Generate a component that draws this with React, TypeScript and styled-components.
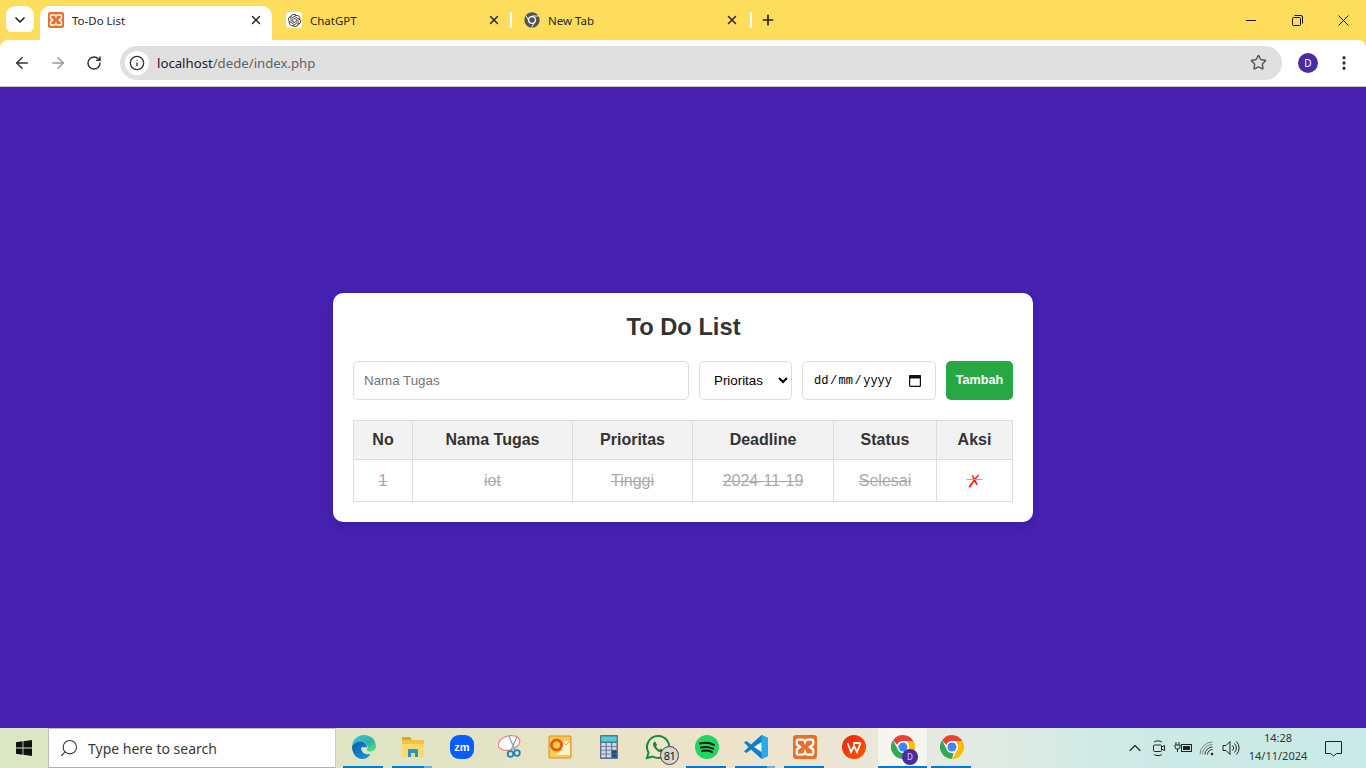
import React from "react";
import styled, { createGlobalStyle } from "styled-components";
import { ArrowLeft, ArrowRight, RotateCw, Info, Star, EllipsisVertical, ChevronDown, X, Plus, ChevronUp, Search } from "lucide-react";
import { SiOpenai } from "react-icons/si";

const Global = createGlobalStyle`
  html, body { margin: 0; padding: 0; height: 100%; overflow: hidden; }
  * { box-sizing: border-box; }
  body { font-family: "Liberation Sans", Arial, sans-serif; }
`;

const Screen = styled.div`
  width: 1366px; height: 768px; display: flex; flex-direction: column; overflow: hidden;
`;
const TabStrip = styled.div`
  height: 40px; flex: none; background: #ffdd5c; display: flex; align-items: flex-end; padding-left: 6px; color: #1f1f1f;
`;
const TabSearch = styled.div`
  width: 28px; height: 28px; border-radius: 9px; background: #fff; align-self: flex-start; margin-top: 6px; margin-right: 6px;
  display: flex; align-items: center; justify-content: center;
`;
const Tab = styled.div<{ $active?: boolean; $sep?: boolean; $w: number; $pad: number }>`
  position: relative; height: 34px; width: ${p => p.$w}px; flex: none; display: flex; align-items: center; padding: 0 0 6px ${p => p.$pad}px;
  font: 11.5px "Noto Sans", "Open Sans", sans-serif; color: #262626;
  background: ${p => p.$active ? "#fff" : "transparent"};
  border-radius: 10px 10px 0 0;
  ${p => p.$sep && `&::after { content: ""; position: absolute; right: 0; top: 6px; width: 2px; height: 16px; background: #fff; }`}
`;
const Favicon = styled.span`
  width: 16px; height: 16px; flex: none; margin-right: 8px; display: flex; align-items: center; justify-content: center; border-radius: 3px;
`;
const WhiteFavicon = styled(Favicon)`background: #fff;`;
const TabTitle = styled.span`flex: 1; white-space: nowrap;`;
const TabClose = styled.span<{ $mr: number }>`width: 16px; height: 16px; margin-right: ${p => p.$mr}px; display: flex; align-items: center; justify-content: center;`;
const NewTab = styled.div`
  width: 32px; height: 28px; align-self: flex-start; margin-top: 6px; display: flex; align-items: center; justify-content: center;
`;
const WinControls = styled.div`
  margin-left: auto; align-self: flex-start; height: 40px; display: flex; color: #111;
`;
const WinButton = styled.div`
  width: 46px; height: 40px; display: flex; align-items: center; justify-content: center;
`;
const Toolbar = styled.div`
  height: 47px; flex: none; background: #fff; display: flex; align-items: center; padding: 0 0 1px 4px; border-bottom: 1px solid #c4c7c5;
  border-radius: 8px 8px 0 0;
  box-shadow: 0 -8px 0 0 #ffdd5c;
`;
const NavButton = styled.div`
  width: 36px; height: 34px; display: flex; align-items: center; justify-content: center; color: #333;
`;
const Omnibox = styled.div`
  width: 1162px; height: 34px; border-radius: 17px; background: #e0e0e0; margin-left: 8px; display: flex; align-items: center; padding: 0 15px 0 5px;
`;
const InfoChip = styled.div`
  width: 24px; height: 24px; border-radius: 50%; background: #fff; display: flex; align-items: center; justify-content: center; color: #333; margin-right: 8px;
`;
const Url = styled.div`font: 13.2px "Noto Sans", sans-serif; color: #5f6368; flex: 1; white-space: nowrap;`;
const Host = styled.span`color: #202124;`;
const Avatar = styled.div`
  width: 20px; height: 20px; border-radius: 50%; background: #4a2aa5; color: #fff; font: 10px "Noto Sans", sans-serif; display: flex; align-items: center; justify-content: center; margin-left: 16px;
`;
const MenuBtn = styled.div`
  width: 36px; margin-left: 8px; height: 34px; display: flex; align-items: center; justify-content: center; color: #333;
`;
const Main = styled.main`
  flex: 1; background: #4520b1; display: flex; align-items: center; justify-content: center;
`;
const Card = styled.div`
  width: 700px; background: #fff; border-radius: 10px; padding: 20px; box-shadow: 0 4px 8px rgba(0,0,0,.1);
`;
const Title = styled.h1`
  margin: 0 0 20px; padding-left: 1px; text-align: center; font-size: 23.7px; line-height: 28px; font-weight: 700; color: #333;
`;
const Form = styled.form`display: flex; gap: 10px; margin-bottom: 20px; height: 39px;`;
const field = `
  height: 39px; border: 1px solid #ddd; border-radius: 5px; font-family: "Liberation Sans", Arial, sans-serif; font-size: 13.33px; background: #fff; padding: 10px; outline: none;
`;
const TaskInput = styled.input`
  ${field} flex: 1; min-width: 0;
  &::placeholder { color: #757575; opacity: 1; }
`;
const PrioritySelect = styled.select`${field} width: 93px; color: #000;`;
const DateField = styled.div`
  ${field} width: 134px; display: flex; align-items: center; justify-content: space-between; padding: 0 14px 0 11px; color: #000;
  font: 12px "Liberation Mono", "DejaVu Sans Mono", monospace; white-space: pre;
`;
const DateSep = styled.span`margin: 0 1.5px;`;
const AddButton = styled.button`
  width: 67px; height: 39px; border: none; border-radius: 5px; background: #28a745; color: #fff; font: 700 12.6px/1 "Liberation Sans", Arial, sans-serif; padding: 0;
`;
const Table = styled.table`
  width: 659px; border-collapse: collapse; table-layout: fixed; color: #333;
`;
const Th = styled.th<{ $w: number }>`
  width: ${p => p.$w}px; height: 39px; padding: 0; border: 1px solid #ddd; background: #f2f2f2; font-size: 16px; font-weight: 700; text-align: center;
`;
const Td = styled.td`
  height: 42px; padding: 0; border: 1px solid #ddd; font-size: 16px; text-align: center; color: #aaa; text-decoration: line-through;
`;
const DeleteMark = styled.a`
  color: #f00; font-family: "DejaVu Sans", sans-serif; font-size: 19px; line-height: 16px; vertical-align: -2px; -webkit-text-stroke: .6px #fff;
`;

const Taskbar = styled.div`
  height: 40px; flex: none; display: flex; align-items: stretch; position: relative;
  background: linear-gradient(90deg, #dbe6c3 0%, #dfe4c4 30%, #eee3c9 52%, #ede6d6 62%, #e2ebe4 72%, #cdeae5 82%, #c8eae6 100%);
`;
const StartBtn = styled.div`width: 48px; display: flex; align-items: center; justify-content: center;`;
const SearchBox = styled.div`
  width: 288px; background: #fff; border: 1px solid #b8bfb6; border-bottom-color: #b0b0b0; border-right-color: #ccc; display: flex; align-items: center; padding-left: 10px; color: #333;
  font: 14px "Noto Sans", "Open Sans", sans-serif; margin-right: 3px;
`;
const MirroredSearch = styled(Search)`transform: scaleX(-1);`;
const SearchText = styled.span`margin-left: 9px; color: #3a3a3a;`;
const Slot = styled.div<{ $active?: boolean }>`
  position: relative; width: 49px; display: flex; align-items: center; justify-content: center; padding-bottom: 2px;
  background: ${p => p.$active ? "rgba(255,255,255,.6)" : "transparent"};
`;
const Running = styled.span<{ $tail?: boolean; $full?: boolean }>`
  position: absolute; bottom: 0; left: ${p => p.$full ? 0 : 4}px; right: ${p => p.$full ? 0 : 5}px; height: 2px;
  background: ${p => p.$tail ? "linear-gradient(90deg, #0078d4 80%, #6bb0e4 80%)" : "#0078d4"};
`;
const Count = styled.span`
  position: absolute; left: 27px; top: 18px; width: 19px; height: 19px; border-radius: 50%; background: #d5d8d0; border: 1px solid #444; color: #111;
  font: 11px/17px "Noto Sans", sans-serif; text-align: center; letter-spacing: -.5px;
`;
const Badge = styled.span`
  position: absolute; left: 24px; top: 21px; width: 16px; height: 16px; border-radius: 50%; background: #4a2aa5; color: #ddd; font: 8px/16px "Noto Sans", sans-serif; text-align: center;
`;
const Tray = styled.div`margin-left: auto; display: flex; align-items: center; color: #222;`;
const TrayIcon = styled.div`width: 24px; height: 40px; display: flex; align-items: center; justify-content: center;`;
const Clock = styled.div`
  width: 66px; margin: -2px 1px 0 2px; font: 11px/18px "Noto Sans", sans-serif; text-align: center; color: #333; white-space: nowrap;
`;
const Notify = styled.div`width: 42px; display: flex; align-items: center; justify-content: center; margin-right: 12px;`;

const XamppIcon = ({ size = 16 }: { size?: number }) => (
  <svg width={size} height={size} viewBox="0 0 16 16">
    <rect width="16" height="16" rx="2" fill="#e8702a" />
    <path d="M3.500 3h3c.8 0 1.200.8 1.500 1.600.3-.8.7-1.600 1.500-1.600h3c.8 0 1 .6 1 1.200v1.400c0 1-.6 1.400-1.400 1.600l-.9.8.9.8c.8.2 1.400.6 1.400 1.600v1.400c0 .6-.2 1.200-1 1.200h-3c-.8 0-1.200-.8-1.500-1.600-.3.8-.7 1.600-1.500 1.600h-3c-.8 0-1-.6-1-1.200v-1.400c0-1 .6-1.400 1.400-1.600l.9-.8-.9-.8C3.100 7 2.500 6.600 2.500 5.600V4.200C2.500 3.600 2.700 3 3.500 3z" fill="none" stroke="#fff" strokeWidth="1.500" />
  </svg>
);
const ChromeIcon = ({ size = 16 }: { size?: number }) => (
  <svg width={size} height={size} viewBox="0 0 24 24">
    <circle cx="12" cy="12" r="12" fill="#fff" />
    <path d="M12 0a12 12 0 0 1 10.400 6H12a6 6 0 0 0-5.700 4.100L2.100 5.200A12 12 0 0 1 12 0z" fill="#ea4335" />
    <path d="M22.400 6A12 12 0 0 1 12 24l5.200-9A6 6 0 0 0 17.200 9 L16 6z" fill="#fbbc04" />
    <path d="M12 24A12 12 0 0 1 2.100 5.200L7 14.800a6 6 0 0 0 6.600 3L12 24z" fill="#34a853" />
    <circle cx="12" cy="12" r="5.600" fill="#fff" />
    <circle cx="12" cy="12" r="4.500" fill="#4285f4" />
  </svg>
);
const GrayChrome = () => (
  <svg width="16" height="16" viewBox="0 0 24 24">
    <circle cx="12" cy="12" r="11.500" fill="#555" />
    <circle cx="12" cy="12" r="6" fill="#fff" />
    <circle cx="12" cy="12" r="4.200" fill="#555" />
    <path d="M12 6h10M8 14.500 3 5.500M16.500 14 11.500 23" stroke="#fff" strokeWidth="1.300" />
  </svg>
);
const MinimizeIcon = () => (
  <svg width="10" height="10" viewBox="0 0 10 10"><path d="M0 5.500h10" stroke="#111" strokeWidth="1" /></svg>
);
const RestoreIcon = () => (
  <svg width="11" height="11" viewBox="0 0 11 11" fill="none" stroke="#111" strokeWidth="1">
    <rect x=".5" y="2.500" width="8" height="8" rx="1" />
    <path d="M2.500 .5h6.500a1.500 1.500 0 0 1 1.500 1.500v6.500" />
  </svg>
);
const CloseIcon = () => (
  <svg width="11" height="11" viewBox="0 0 11 11" fill="none" stroke="#111" strokeWidth="1"><path d="M.5.5l10 10M10.500.5l-10 10" /></svg>
);
const WinLogo = () => (
  <svg width="16" height="16" viewBox="0 0 16 16" fill="#111">
    <path d="M0 2.300 6.600 1.300v6.300H0zM7.400 1.200 16 0v7.600H7.400zM0 8.400h6.600v6.300L0 13.700zM7.400 8.400H16V16l-8.600-1.200z" />
  </svg>
);
const EdgeIcon = () => (
  <svg width="24" height="24" viewBox="0 0 24 24">
    <defs>
      <linearGradient id="eg1" x1="0" y1="0" x2="1" y2="1"><stop offset="0" stopColor="#35c1f1" /><stop offset=".6" stopColor="#2fb5a0" /><stop offset="1" stopColor="#66eb6e" /></linearGradient>
      <linearGradient id="eg2" x1="0" y1="0" x2="1" y2="1"><stop offset="0" stopColor="#0c59a4" /><stop offset="1" stopColor="#1b9de2" /></linearGradient>
    </defs>
    <path d="M12 0c7 0 12 5 12 11.500 0 3-2.500 5-5.500 5-2 0-3.700-.8-3.700-1.800 0-.6.900-.9.900-2.500 0-3-3-5.700-6.700-5.700C5 6.500 1.500 8.500 0 11.500.2 5 5.500 0 12 0z" fill="url(#eg1)" />
    <path d="M0 11.500C1.500 8.500 5 6.500 8.500 6.500c3.700 0 6.700 2.700 6.700 5.700H9.300c-.6 3.500 2 8 9.200 7-2 2.800-4.500 4.800-8 4.800C4 24 0 18 0 11.500z" fill="url(#eg2)" />
  </svg>
);
const FolderIcon = () => (
  <svg width="24" height="22" viewBox="0 0 24 22">
    <path d="M1 1h8l2 3H1z" fill="#e0a526" />
    <rect x="1" y="4" width="22" height="17" rx="1" fill="#fcd96a" />
    <rect x="1" y="4" width="22" height="4" fill="#f4c33e" />
    <path d="M7 21v-7a1 1 0 0 1 1-1h8a1 1 0 0 1 1 1v7h-3v-4h-4v4z" fill="#2b8fd8" />
  </svg>
);
const ZoomIcon = () => (
  <svg width="24" height="24" viewBox="0 0 24 24">
    <rect width="24" height="24" rx="9" fill="#0b5cff" />
    <text x="12" y="15.500" textAnchor="middle" fontFamily="Liberation Sans, sans-serif" fontWeight="700" fontSize="11" fill="#fff">zm</text>
  </svg>
);
const SnipIcon = () => (
  <svg width="26" height="26" viewBox="0 0 26 26">
    <ellipse cx="11" cy="9" rx="11" ry="7" transform="rotate(-15 11 9)" fill="#fff" stroke="#e58a8a" strokeWidth="1.300" />
    <path d="M11 2 17 16M19 3 13 16" stroke="#8a9aa8" strokeWidth="1.200" />
    <circle cx="12.500" cy="20" r="2.800" fill="none" stroke="#2a7fc0" strokeWidth="1.800" />
    <circle cx="19" cy="19" r="2.800" fill="none" stroke="#2a7fc0" strokeWidth="1.800" />
  </svg>
);
const OutlookIcon = () => (
  <svg width="24" height="24" viewBox="0 0 24 24">
    <rect x="1" y="1" width="22" height="22" rx="1" fill="#f9c952" stroke="#d98f1e" />
    <rect x="13" y="6" width="9" height="8" fill="#fdf0c8" />
    <path d="M13 16 22 10v10H8z" fill="#fff3cf" />
    <path d="M14 6l4 4 4-4" fill="none" stroke="#c9952c" strokeWidth=".8" />
    <circle cx="8.500" cy="10" r="5" fill="none" stroke="#e35f10" strokeWidth="3" />
  </svg>
);
const CalcIcon = () => (
  <svg width="18" height="24" viewBox="0 0 20 24" preserveAspectRatio="none">
    <rect width="20" height="24" rx="1" fill="#5e7388" />
    <rect x="1.500" y="1.500" width="17" height="5" fill="#47cfe0" />
    {[0, 1, 2, 3].flatMap(r => [0, 1, 2].map(c => (
      <rect key={`${r}-${c}`} x={1.5 + c * 6} y={8 + r * 3.8} width="4.800" height="3" fill={c === 2 && r > 1 ? "#1b4f8a" : "#cfd8e0"} />
    )))}
  </svg>
);
const WhatsappIcon = () => (
  <svg width="26" height="26" viewBox="0 0 26 26" fill="none">
    <path d="M13 2a11 11 0 0 0-9.500 16.500L2 24l5.700-1.500A11 11 0 1 0 13 2z" stroke="#168a3e" strokeWidth="2" fill="#fff" fillOpacity=".1" />
    <path d="M9.500 7.500c-1.500 1-2 2.700-1 4.800 1.200 2.500 3.300 4.600 5.800 5.600 2 .8 3.700.1 4.300-1.500l-2.800-1.800-1.300 1.200c-1.500-.6-2.800-2-3.500-3.500l1.100-1.300-1.600-3z" fill="#168a3e" />
  </svg>
);
const SpotifyIcon = () => (
  <svg width="24" height="24" viewBox="0 0 24 24">
    <circle cx="12" cy="12" r="12" fill="#1ed760" />
    <path d="M5 8.500c5-1.300 10-.9 14 1.300M6 12.500c4.200-1 8.500-.7 12 1.200M7 16c3.500-.8 7-.6 10 1" fill="none" stroke="#111" strokeWidth="2" strokeLinecap="round" />
  </svg>
);
const VscodeIcon = () => (
  <svg width="24" height="24" viewBox="0 0 24 24">
    <path d="M17.500 0 24 3v18l-6.500 3L7 14.500 2.500 18 0 16.500 4.500 12 0 7.500 2.500 6 7 9.500z" fill="#0e7fc9" />
    <path d="M17.500 0 24 3v18l-6.500 3z" fill="#29a9ef" />
    <path d="M17.500 7 10 12l7.500 5z" fill="#fff" fillOpacity=".95" />
  </svg>
);
const WpsIcon = () => (
  <svg width="24" height="24" viewBox="0 0 24 24">
    <defs>
      <linearGradient id="wp" x1="0" y1="0" x2="1" y2="1"><stop offset="0" stopColor="#f0200e" /><stop offset="1" stopColor="#ff5a00" /></linearGradient>
    </defs>
    <circle cx="12" cy="12" r="12" fill="url(#wp)" />
    <path d="M5.500 8 9 17l3-6 3 6 3.500-9M12 11V8h6.500" fill="none" stroke="#fff" strokeWidth="1.800" />
  </svg>
);
const CameraIcon = () => (
  <svg width="16" height="18" viewBox="0 0 16 18" fill="none" stroke="#222">
    <rect x="2.500" y="6" width="8" height="6.500" rx="1" />
    <path d="M10.500 8l3-1.500v5l-3-1.500M3 3c2-1.500 6-1.500 8 0M3 15.500c2 1.500 6 1.500 8 0" />
  </svg>
);
const BatteryIcon = () => (
  <svg width="18" height="14" viewBox="0 0 18 14" fill="none" stroke="#222">
    <path d="M2 1v3M5 1v3M1 4h5v2a2 2 0 0 1-2 2H3a2 2 0 0 1-2-2zM3.500 8v3" />
    <rect x="7.500" y="3.500" width="10" height="7" />
    <rect x="9" y="5" width="7" height="4" fill="#222" stroke="none" />
  </svg>
);
const WifiIcon = () => (
  <svg width="16" height="16" viewBox="0 0 16 16" fill="none" stroke="#333">
    <path d="M1 14.500A12.500 12.500 0 0 1 13.500 2" opacity=".55" />
    <path d="M3.500 14.500A10 10 0 0 1 13.500 4.500" opacity=".55" />
    <path d="M6 14.500A7.500 7.500 0 0 1 13.500 7" />
    <path d="M8.500 14.500a5 5 0 0 1 5-5" />
    <circle cx="13" cy="14" r="1.300" fill="#222" stroke="none" />
  </svg>
);
const VolumeIcon = () => (
  <svg width="18" height="16" viewBox="0 0 18 16" fill="none" stroke="#222">
    <path d="M1 5.500h3L8 1.500v13l-4-4H1z" />
    <path d="M10.500 5.500a3.500 3.500 0 0 1 0 5M12.500 3.500a6.500 6.500 0 0 1 0 9M14.500 1.500a9.500 9.500 0 0 1 0 13" />
  </svg>
);
const BubbleIcon = () => (
  <svg width="17" height="17" viewBox="0 0 17 17" fill="none" stroke="#222">
    <path d="M.5 1.500h16v12h-5l-3 2.500-3-2.500h-5z" />
  </svg>
);
const CalendarGlyph = () => (
  <svg width="12" height="12" viewBox="0 0 12 12" fill="none">
    <rect x=".6" y=".6" width="10.800" height="10.800" rx="1" stroke="#111" strokeWidth="1.200" />
    <rect x="0" y="0" width="12" height="3.500" rx="1" fill="#111" />
  </svg>
);

const icons = [
  { i: <EdgeIcon />, run: true },
  { i: <FolderIcon />, run: true, tail: true },
  { i: <ZoomIcon /> },
  { i: <SnipIcon /> },
  { i: <OutlookIcon /> },
  { i: <CalcIcon /> },
  { i: <WhatsappIcon />, count: "81" },
  { i: <SpotifyIcon />, run: true },
  { i: <VscodeIcon />, run: true, tail: true },
  { i: <XamppIcon size={24} />, run: true },
  { i: <WpsIcon /> },
  { i: <ChromeIcon size={24} />, run: true, active: true, badge: "D" },
  { i: <ChromeIcon size={24} />, run: true },
];

export default function App() {
  return (
    <Screen>
      <Global />
      <TabStrip>
        <TabSearch><ChevronDown size={16} strokeWidth={2.5} /></TabSearch>
        <Tab $active $w={232} $pad={8}>
          <Favicon><XamppIcon /></Favicon>
          <TabTitle>To-Do List</TabTitle>
          <TabClose $mr={8}><X size={14} strokeWidth={2.5} /></TabClose>
        </Tab>
        <Tab $w={240} $pad={14} $sep>
          <WhiteFavicon><SiOpenai size={13} color="#333" /></WhiteFavicon>
          <TabTitle>ChatGPT</TabTitle>
          <TabClose $mr={10}><X size={14} strokeWidth={2.5} /></TabClose>
        </Tab>
        <Tab $w={240} $pad={12} $sep>
          <Favicon><GrayChrome /></Favicon>
          <TabTitle>New Tab</TabTitle>
          <TabClose $mr={12}><X size={14} strokeWidth={2.5} /></TabClose>
        </Tab>
        <NewTab><Plus size={16} strokeWidth={2.5} /></NewTab>
        <WinControls>
          <WinButton><MinimizeIcon /></WinButton>
          <WinButton><RestoreIcon /></WinButton>
          <WinButton><CloseIcon /></WinButton>
        </WinControls>
      </TabStrip>
      <Toolbar>
        <NavButton><ArrowLeft size={18} strokeWidth={2} /></NavButton>
        <NavButton><ArrowRight size={18} strokeWidth={2} color="#9a9a9a" /></NavButton>
        <NavButton><RotateCw size={16} strokeWidth={2.2} /></NavButton>
        <Omnibox>
          <InfoChip><Info size={16} strokeWidth={2} /></InfoChip>
          <Url><Host>localhost</Host>/dede/index.php</Url>
          <Star size={17} strokeWidth={2} color="#555" />
        </Omnibox>
        <Avatar>D</Avatar>
        <MenuBtn><EllipsisVertical size={18} strokeWidth={2.5} /></MenuBtn>
      </Toolbar>
      <Main>
        <Card>
          <Title>To Do List</Title>
          <Form onSubmit={e => e.preventDefault()}>
            <TaskInput placeholder="Nama Tugas" />
            <PrioritySelect defaultValue="">
              <option value="">Prioritas</option>
              <option>Tinggi</option>
            </PrioritySelect>
            <DateField>
              <span>dd<DateSep>/</DateSep>mm<DateSep>/</DateSep>yyyy</span>
              <CalendarGlyph />
            </DateField>
            <AddButton type="button">Tambah</AddButton>
          </Form>
          <Table>
            <thead>
              <tr>
                <Th $w={59}>No</Th>
                <Th $w={160}>Nama Tugas</Th>
                <Th $w={120}>Prioritas</Th>
                <Th $w={141}>Deadline</Th>
                <Th $w={103}>Status</Th>
                <Th $w={76}>Aksi</Th>
              </tr>
            </thead>
            <tbody>
              <tr>
                <Td>1</Td>
                <Td>iot</Td>
                <Td>Tinggi</Td>
                <Td>2024-11-19</Td>
                <Td>Selesai</Td>
                <Td><DeleteMark>✗</DeleteMark></Td>
              </tr>
            </tbody>
          </Table>
        </Card>
      </Main>
      <Taskbar>
        <StartBtn><WinLogo /></StartBtn>
        <SearchBox>
          <MirroredSearch size={20} strokeWidth={1.3} />
          <SearchText>Type here to search</SearchText>
        </SearchBox>
        {icons.map((a, n) => (
          <Slot key={n} $active={a.active}>
            {a.i}
            {a.count && <Count>{a.count}</Count>}
            {a.badge && <Badge>{a.badge}</Badge>}
            {a.run && <Running $tail={a.tail} $full={a.active} />}
          </Slot>
        ))}
        <Tray>
          <TrayIcon><ChevronUp size={20} strokeWidth={1.3} /></TrayIcon>
          <TrayIcon><CameraIcon /></TrayIcon>
          <TrayIcon><BatteryIcon /></TrayIcon>
          <TrayIcon><WifiIcon /></TrayIcon>
          <TrayIcon><VolumeIcon /></TrayIcon>
          <Clock>14:28<br />14/11/2024</Clock>
          <Notify><BubbleIcon /></Notify>
        </Tray>
      </Taskbar>
    </Screen>
  );
}
